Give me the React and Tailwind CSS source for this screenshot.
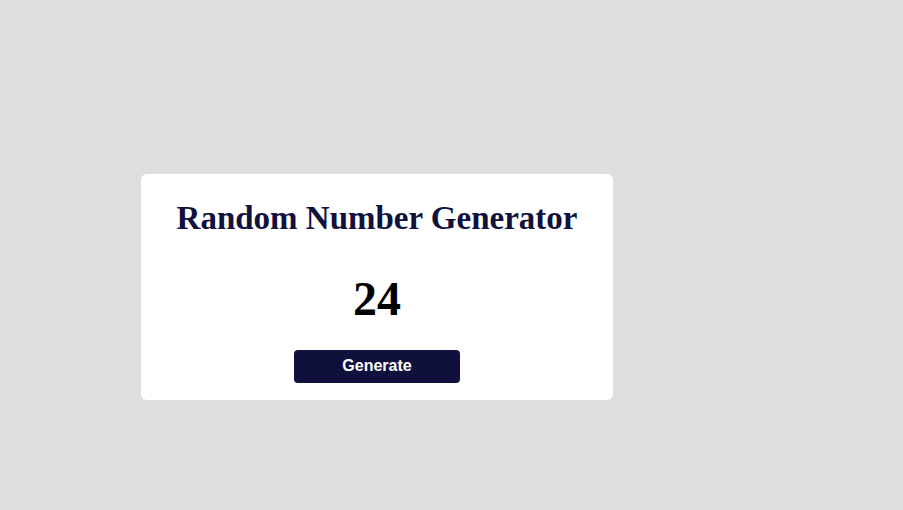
import { useState } from 'react';

const App = () => {
    const [num, setNum] = useState(24);

    return (
        <div className="min-h-[510px] w-full bg-[#dedede] pl-[141px] pt-[174px]">
            <div className="w-[472px] bg-white rounded-md flex flex-col items-center pt-[24px] pb-[17px]">
                <h1 className="font-['Liberation_Serif',serif] font-bold text-[33px] leading-[40px] text-[#11113d]">
                    Random Number Generator
                </h1>
                <div className="mt-[34px] font-['Liberation_Serif',serif] font-bold text-[48px] leading-[53px] text-black">
                    {num}
                </div>
                <button
                    onClick={() => setNum(Math.floor(Math.random() * 100) + 1)}
                    className="mt-[25px] w-[166px] h-[33px] pb-[2px] rounded bg-[#10103d] text-white font-['Liberation_Sans',sans-serif] font-bold text-base"
                >
                    Generate
                </button>
            </div>
        </div>
    );
};

export default App;
